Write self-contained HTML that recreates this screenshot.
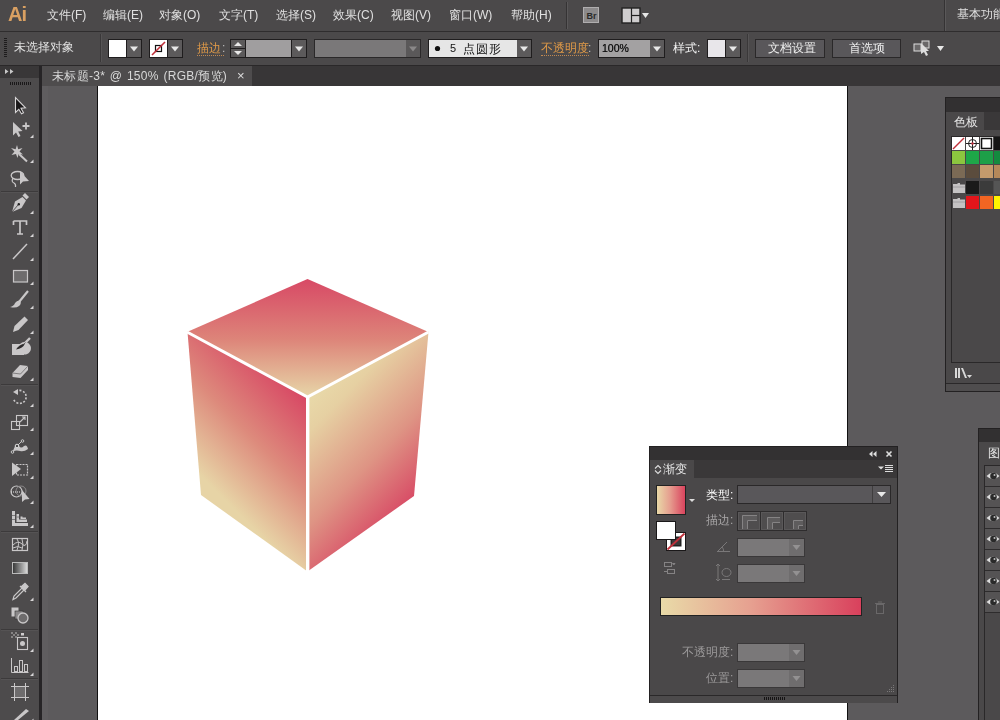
<!DOCTYPE html>
<html><head><meta charset="utf-8">
<style>
*{margin:0;padding:0;box-sizing:border-box}
html,body{width:1000px;height:720px;overflow:hidden;background:#5c5a5c;font-family:"Liberation Sans",sans-serif;font-size:12px;color:#e0e0e0}
.a{position:absolute}
.t{position:absolute;white-space:nowrap;line-height:1;will-change:transform}
</style></head><body>
<div class="a" style="left:0px;top:0px;width:1000px;height:31px;background:#4b494a;"></div><div class="a" style="left:0px;top:31px;width:1000px;height:1px;background:#2f2d2e;"></div><div class="t" style="left:8px;top:4px;font-size:20px;font-weight:bold;color:#d9a062;letter-spacing:-1px">Ai</div><div class="t" style="left:47px;top:9px;">文件(F)</div><div class="t" style="left:103px;top:9px;">编辑(E)</div><div class="t" style="left:159px;top:9px;">对象(O)</div><div class="t" style="left:219px;top:9px;">文字(T)</div><div class="t" style="left:276px;top:9px;">选择(S)</div><div class="t" style="left:333px;top:9px;">效果(C)</div><div class="t" style="left:391px;top:9px;">视图(V)</div><div class="t" style="left:449px;top:9px;">窗口(W)</div><div class="t" style="left:511px;top:9px;">帮助(H)</div><div class="a" style="left:566px;top:2px;width:1px;height:27px;background:#353334;"></div><div class="a" style="left:567px;top:2px;width:1px;height:27px;background:#5a5859;"></div><svg class="a" style="left:580px;top:5px" width="75" height="22" viewBox="0 0 75 22"><rect x="3.5" y="2.5" width="15" height="15" fill="#8c8a8b" stroke="#b0aeaf"/><text x="6.5" y="14" font-family="Liberation Sans" font-size="9" font-weight="bold" fill="#2a2a2a">Br</text><rect x="42" y="3" width="18" height="15" fill="#cfcdce" stroke="#222" stroke-width="1.4"/><line x1="51.5" y1="3" x2="51.5" y2="18" stroke="#222" stroke-width="1.2"/><line x1="51.5" y1="10.5" x2="60" y2="10.5" stroke="#222" stroke-width="1.2"/><path d="M62 8 L69 8 L65.5 13 Z" fill="#e6e6e6"/></svg><div class="a" style="left:944px;top:0px;width:1px;height:31px;background:#353334;"></div><div class="a" style="left:945px;top:0px;width:1px;height:31px;background:#5a5859;"></div><div class="t" style="left:957px;top:8px;">基本功能</div><div class="a" style="left:0px;top:32px;width:1000px;height:33px;background:#4b494a;"></div><div class="a" style="left:0px;top:65px;width:1000px;height:1px;background:#2a2829;"></div><svg class="a" style="left:4px;top:38px" width="4" height="20"><g fill="#1e1c1d"><rect x="0" y="0" width="3" height="1"/><rect x="0" y="2" width="3" height="1"/><rect x="0" y="4" width="3" height="1"/><rect x="0" y="6" width="3" height="1"/><rect x="0" y="8" width="3" height="1"/><rect x="0" y="10" width="3" height="1"/><rect x="0" y="12" width="3" height="1"/><rect x="0" y="14" width="3" height="1"/><rect x="0" y="16" width="3" height="1"/><rect x="0" y="18" width="3" height="1"/></g></svg><div class="t" style="left:14px;top:41px;">未选择对象</div><div class="a" style="left:100px;top:34px;width:1px;height:28px;background:#3a3839;"></div><div class="a" style="left:101px;top:34px;width:1px;height:28px;background:#565455;"></div><div class="a" style="left:108px;top:39px;width:34px;height:19px;background:#1f1d1e;"></div><div class="a" style="left:109px;top:40px;width:17px;height:17px;background:#ffffff;"></div><div class="a" style="left:127px;top:40px;width:14px;height:17px;background:#5c5a5b;"></div><svg class="a" style="left:127px;top:40px" width="14" height="17"><path d="M3.0 6.5 L11.0 6.5 L7.0 11.5 Z" fill="#e8e8e8"/></svg><div class="a" style="left:149px;top:39px;width:34px;height:19px;background:#1f1d1e;"></div><div class="a" style="left:150px;top:40px;width:17px;height:17px;background:#ffffff;"></div><svg class="a" style="left:150px;top:40px" width="17" height="17"><rect x="5.5" y="5.5" width="6" height="6" fill="none" stroke="#111" stroke-width="1.2"/><line x1="2" y1="15" x2="15" y2="2" stroke="#c0303a" stroke-width="1.6"/></svg><div class="a" style="left:168px;top:40px;width:14px;height:17px;background:#5c5a5b;"></div><svg class="a" style="left:168px;top:40px" width="14" height="17"><path d="M3.0 6.5 L11.0 6.5 L7.0 11.5 Z" fill="#e8e8e8"/></svg><div class="t" style="left:197px;top:42px;color:#e09a48">描边</div><div class="a" style="left:197px;top:55px;width:27px;height:0;border-top:1px dotted #c08850"></div><div class="t" style="left:222px;top:42px;color:#bbb">:</div><div class="a" style="left:230px;top:39px;width:77px;height:19px;background:#1f1d1e;"></div><div class="a" style="left:231px;top:40px;width:14px;height:8px;background:#5c5a5b;"></div><div class="a" style="left:231px;top:49px;width:14px;height:8px;background:#5c5a5b;"></div><svg class="a" style="left:231px;top:40px" width="14" height="17"><path d="M3 6 L11 6 L7 2 Z M3 11 L11 11 L7 15 Z" fill="#e8e8e8"/></svg><div class="a" style="left:246px;top:40px;width:45px;height:17px;background:#a09e9f;"></div><div class="a" style="left:292px;top:40px;width:14px;height:17px;background:#5c5a5b;"></div><svg class="a" style="left:292px;top:40px" width="14" height="17"><path d="M3.0 6.5 L11.0 6.5 L7.0 11.5 Z" fill="#e8e8e8"/></svg><div class="a" style="left:314px;top:39px;width:107px;height:19px;background:#2a2829;"></div><div class="a" style="left:315px;top:40px;width:91px;height:17px;background:#7a7879;"></div><div class="a" style="left:406px;top:40px;width:14px;height:17px;background:#5a5859;"></div><svg class="a" style="left:406px;top:40px" width="14" height="17"><path d="M3.0 6.5 L11.0 6.5 L7.0 11.5 Z" fill="#8a8889"/></svg><div class="a" style="left:428px;top:39px;width:104px;height:19px;background:#1f1d1e;"></div><div class="a" style="left:429px;top:40px;width:88px;height:17px;background:#e6e6e6;"></div><svg class="a" style="left:429px;top:40px" width="88" height="17"><circle cx="8.5" cy="8.5" r="2.6" fill="#111"/></svg><div class="t" style="left:450px;top:43px;color:#111;font-size:11px">5</div><div class="t" style="left:463px;top:43px;color:#111;letter-spacing:0.8px">点圆形</div><div class="a" style="left:517px;top:40px;width:14px;height:17px;background:#5c5a5b;"></div><svg class="a" style="left:517px;top:40px" width="14" height="17"><path d="M3.0 6.5 L11.0 6.5 L7.0 11.5 Z" fill="#e8e8e8"/></svg><div class="t" style="left:541px;top:42px;color:#e09a48">不透明度</div><div class="a" style="left:541px;top:55px;width:48px;height:0;border-top:1px dotted #c08850"></div><div class="t" style="left:588px;top:42px;color:#bbb">:</div><div class="a" style="left:598px;top:39px;width:67px;height:19px;background:#1f1d1e;"></div><div class="a" style="left:599px;top:40px;width:51px;height:17px;background:#a3a1a2;"></div><div class="t" style="left:602px;top:43px;color:#000;font-size:10.5px;-webkit-text-stroke:0.2px #000">100%</div><div class="a" style="left:650px;top:40px;width:14px;height:17px;background:#5c5a5b;"></div><svg class="a" style="left:650px;top:40px" width="14" height="17"><path d="M3.0 6.5 L11.0 6.5 L7.0 11.5 Z" fill="#e8e8e8"/></svg><div class="t" style="left:673px;top:42px;color:#f2f2f2">样式:</div><div class="a" style="left:707px;top:39px;width:34px;height:19px;background:#1f1d1e;"></div><div class="a" style="left:708px;top:40px;width:17px;height:17px;background:#e8e6ea;"></div><div class="a" style="left:726px;top:40px;width:14px;height:17px;background:#5c5a5b;"></div><svg class="a" style="left:726px;top:40px" width="14" height="17"><path d="M3.0 6.5 L11.0 6.5 L7.0 11.5 Z" fill="#e8e8e8"/></svg><div class="a" style="left:747px;top:34px;width:1px;height:28px;background:#3a3839;"></div><div class="a" style="left:748px;top:34px;width:1px;height:28px;background:#565455;"></div><div class="a" style="left:755px;top:39px;width:70px;height:19px;background:#2a2829;"></div><div class="a" style="left:756px;top:40px;width:68px;height:17px;background:#59575a;"></div><div class="t" style="left:768px;top:42px;color:#eee">文档设置</div><div class="a" style="left:832px;top:39px;width:69px;height:19px;background:#2a2829;"></div><div class="a" style="left:833px;top:40px;width:67px;height:17px;background:#59575a;"></div><div class="t" style="left:849px;top:42px;color:#eee">首选项</div><svg class="a" style="left:910px;top:38px" width="40" height="20"><rect x="4" y="6" width="7" height="7" fill="#6a6869" stroke="#ddd"/><rect x="12" y="3" width="7" height="7" fill="#6a6869" stroke="#ddd"/><path d="M11 5 L19 13 L16 13 L18 17 L16 18 L14 14 L11 16 Z" fill="#ddd"/><path d="M27 8 L34 8 L30.5 13 Z" fill="#e8e8e8"/></svg><div class="a" style="left:0px;top:66px;width:1000px;height:20px;background:#383637;"></div><div class="a" style="left:41px;top:66px;width:211px;height:20px;background:#4e4c4d;"></div><div class="t" style="left:52px;top:70px;color:#d8d8d8;letter-spacing:0.3px;word-spacing:1px">未标题-3* @ 150% (RGB/预览)</div><div class="t" style="left:237px;top:69px;color:#ddd;font-size:13px">×</div><div class="a" style="left:41px;top:86px;width:959px;height:634px;background:#5c5a5c;"></div><div class="a" style="left:97px;top:86px;width:751px;height:634px;background:#111;"></div><div class="a" style="left:98px;top:86px;width:749px;height:634px;background:#ffffff;"></div><div class="a" style="left:0px;top:66px;width:39px;height:654px;background:#4d4b4c;"></div><div class="a" style="left:0px;top:66px;width:39px;height:12px;background:#393738;"></div><svg class="a" style="left:4px;top:67px" width="20" height="9"><path d="M1 2 L4.5 4.5 L1 7 Z M6 2 L9.5 4.5 L6 7 Z" fill="#c8c8c8"/></svg><div class="a" style="left:39px;top:66px;width:3px;height:654px;background:#262426;"></div><div class="a" style="left:42px;top:86px;width:6px;height:634px;background:#5f5d5f;"></div><svg class="a" style="left:10px;top:82px" width="22" height="4"><g fill="#1a1819"><rect x="0" y="0" width="1" height="3"/><rect x="2" y="0" width="1" height="3"/><rect x="4" y="0" width="1" height="3"/><rect x="6" y="0" width="1" height="3"/><rect x="8" y="0" width="1" height="3"/><rect x="10" y="0" width="1" height="3"/><rect x="12" y="0" width="1" height="3"/><rect x="14" y="0" width="1" height="3"/><rect x="16" y="0" width="1" height="3"/><rect x="18" y="0" width="1" height="3"/><rect x="20" y="0" width="1" height="3"/></g></svg><svg class="a" style="left:0;top:0" width="1000" height="720" viewBox="0 0 1000 720"><defs><linearGradient id="gt" gradientUnits="userSpaceOnUse" x1="307" y1="281" x2="307" y2="397"><stop offset="0" stop-color="#d84b66"/><stop offset="0.5" stop-color="#dd8479"/><stop offset="1" stop-color="#e7d6a8"/></linearGradient><linearGradient id="gl" gradientUnits="userSpaceOnUse" x1="300" y1="395" x2="210" y2="485"><stop offset="0" stop-color="#d84a65"/><stop offset="0.5" stop-color="#dd8a7c"/><stop offset="1" stop-color="#e7d4a6"/></linearGradient><linearGradient id="gr" gradientUnits="userSpaceOnUse" x1="310" y1="400" x2="414" y2="500"><stop offset="0" stop-color="#e8d8a8"/><stop offset="0.15" stop-color="#e6d0a2"/><stop offset="0.6" stop-color="#de9484"/><stop offset="1" stop-color="#d84a65"/></linearGradient></defs><path d="M307.5 279 L428.5 332 L307.5 397 L187 332 Z" fill="url(#gt)"/><path d="M187.5 332 L307.5 397 L307.5 571.5 L201 495 Z" fill="url(#gl)"/><path d="M307.5 397 L428.5 332 L414 496 L307.5 571.5 Z" fill="url(#gr)"/><path d="M187 332 L307.5 397 L428.5 332" fill="none" stroke="#fff" stroke-width="3" stroke-linejoin="miter"/><path d="M307.7 397 L307.7 572" fill="none" stroke="#fff" stroke-width="3.4"/></svg><div class="a" style="left:945px;top:97px;width:55px;height:295px;background:#232122;"></div><div class="a" style="left:946px;top:98px;width:54px;height:14px;background:#323031;"></div><div class="a" style="left:946px;top:112px;width:54px;height:18px;background:#3a3839;"></div><div class="a" style="left:946px;top:112px;width:38px;height:19px;background:#4a4849;"></div><div class="t" style="left:954px;top:116px;color:#e6e6e6;font-size:12px">色板</div><div class="a" style="left:946px;top:130px;width:54px;height:254px;background:#4a4849;"></div><div class="a" style="left:951px;top:136px;width:49px;height:227px;background:#2a2829;"></div><div class="a" style="left:952px;top:137px;width:48px;height:225px;background:#4a4849;"></div><div class="a" style="left:952px;top:137px;width:13px;height:13px;background:#fff;"></div><svg class="a" style="left:952px;top:137px" width="13" height="13"><line x1="1" y1="12" x2="12" y2="1" stroke="#c0303a" stroke-width="1.5"/></svg><div class="a" style="left:966px;top:137px;width:13px;height:13px;background:#fff;"></div><svg class="a" style="left:966px;top:137px" width="13" height="13"><circle cx="6.5" cy="6.5" r="4" fill="none" stroke="#222" stroke-width="1"/><line x1="6.5" y1="0" x2="6.5" y2="13" stroke="#222"/><line x1="0" y1="6.5" x2="13" y2="6.5" stroke="#222"/><circle cx="6.5" cy="6.5" r="1.3" fill="#c03040"/></svg><div class="a" style="left:980px;top:137px;width:13px;height:13px;background:#fff;"></div><svg class="a" style="left:980px;top:137px" width="13" height="13"><rect x="1.5" y="1.5" width="10" height="10" fill="#fff" stroke="#111" stroke-width="1.6"/></svg><div class="a" style="left:994px;top:137px;width:13px;height:13px;background:#151515;"></div><div class="a" style="left:952px;top:151px;width:13px;height:13px;background:#8cc63f;"></div><div class="a" style="left:966px;top:151px;width:13px;height:13px;background:#1ea748;"></div><div class="a" style="left:980px;top:151px;width:13px;height:13px;background:#1d9f48;"></div><div class="a" style="left:994px;top:151px;width:13px;height:13px;background:#138a3f;"></div><div class="a" style="left:952px;top:165px;width:13px;height:13px;background:#7b6a55;"></div><div class="a" style="left:966px;top:165px;width:13px;height:13px;background:#5b4c3d;"></div><div class="a" style="left:980px;top:165px;width:13px;height:13px;background:#c49a6c;"></div><div class="a" style="left:994px;top:165px;width:13px;height:13px;background:#b5885a;"></div><div class="a" style="left:952px;top:181px;width:13px;height:13px;background:#4a4849;"></div><svg class="a" style="left:952px;top:181px" width="13" height="13"><path d="M1 3 L5 3 L6 2 L8 2 L8 3.5 L13 3.5 L13 12 L1 12 Z" fill="#c4c2c3"/><path d="M1 6 H13" stroke="#9a9899" stroke-width="0.8"/></svg><div class="a" style="left:966px;top:181px;width:13px;height:13px;background:#1a1a1a;"></div><div class="a" style="left:980px;top:181px;width:13px;height:13px;background:#3b3b3b;"></div><div class="a" style="left:994px;top:181px;width:13px;height:13px;background:#555;"></div><div class="a" style="left:952px;top:196px;width:13px;height:13px;background:#4a4849;"></div><svg class="a" style="left:952px;top:196px" width="13" height="13"><path d="M1 3 L5 3 L6 2 L8 2 L8 3.5 L13 3.5 L13 12 L1 12 Z" fill="#c4c2c3"/><path d="M1 6 H13" stroke="#9a9899" stroke-width="0.8"/></svg><div class="a" style="left:966px;top:196px;width:13px;height:13px;background:#e3151b;"></div><div class="a" style="left:980px;top:196px;width:13px;height:13px;background:#f26522;"></div><div class="a" style="left:994px;top:196px;width:13px;height:13px;background:#fff200;"></div><svg class="a" style="left:954px;top:366px" width="22" height="14"><g fill="#d8d8d8"><rect x="1" y="2" width="2" height="10"/><rect x="4" y="2" width="2" height="10"/><path d="M7 2 L9 2 L13 12 L11 12 Z"/></g><path d="M13 9 L18 9 L15.5 12 Z" fill="#d8d8d8"/></svg><div class="a" style="left:946px;top:383px;width:54px;height:1px;background:#2a2829;"></div><div class="a" style="left:946px;top:384px;width:54px;height:7px;background:#4f4d4e;"></div><div class="a" style="left:978px;top:428px;width:22px;height:292px;background:#232122;"></div><div class="a" style="left:979px;top:429px;width:21px;height:13px;background:#323031;"></div><div class="a" style="left:979px;top:442px;width:21px;height:24px;background:#4a4849;"></div><div class="t" style="left:988px;top:447px;color:#e6e6e6;font-size:12px">图层</div><div class="a" style="left:979px;top:466px;width:21px;height:254px;background:#4a4849;"></div><div class="a" style="left:984px;top:465px;width:1px;height:255px;background:#2a2829;"></div><div class="a" style="left:985px;top:465px;width:15px;height:1px;background:#2a2829;"></div><div class="a" style="left:985px;top:466px;width:15px;height:20px;background:#555354;"></div><div class="a" style="left:985px;top:486px;width:15px;height:1px;background:#2e2c2d;"></div><svg class="a" style="left:986px;top:470px" width="14" height="12"><path d="M0.5 6 Q7 -0.5 13.5 6 Q7 12.5 0.5 6 Z" fill="#dcdcdc"/><circle cx="7.5" cy="6" r="3.3" fill="#2a2a2a"/><circle cx="8.5" cy="5" r="1" fill="#bbb"/></svg><div class="a" style="left:985px;top:487px;width:15px;height:20px;background:#555354;"></div><div class="a" style="left:985px;top:507px;width:15px;height:1px;background:#2e2c2d;"></div><svg class="a" style="left:986px;top:491px" width="14" height="12"><path d="M0.5 6 Q7 -0.5 13.5 6 Q7 12.5 0.5 6 Z" fill="#dcdcdc"/><circle cx="7.5" cy="6" r="3.3" fill="#2a2a2a"/><circle cx="8.5" cy="5" r="1" fill="#bbb"/></svg><div class="a" style="left:985px;top:508px;width:15px;height:20px;background:#555354;"></div><div class="a" style="left:985px;top:528px;width:15px;height:1px;background:#2e2c2d;"></div><svg class="a" style="left:986px;top:512px" width="14" height="12"><path d="M0.5 6 Q7 -0.5 13.5 6 Q7 12.5 0.5 6 Z" fill="#dcdcdc"/><circle cx="7.5" cy="6" r="3.3" fill="#2a2a2a"/><circle cx="8.5" cy="5" r="1" fill="#bbb"/></svg><div class="a" style="left:985px;top:529px;width:15px;height:20px;background:#555354;"></div><div class="a" style="left:985px;top:549px;width:15px;height:1px;background:#2e2c2d;"></div><svg class="a" style="left:986px;top:533px" width="14" height="12"><path d="M0.5 6 Q7 -0.5 13.5 6 Q7 12.5 0.5 6 Z" fill="#dcdcdc"/><circle cx="7.5" cy="6" r="3.3" fill="#2a2a2a"/><circle cx="8.5" cy="5" r="1" fill="#bbb"/></svg><div class="a" style="left:985px;top:550px;width:15px;height:20px;background:#555354;"></div><div class="a" style="left:985px;top:570px;width:15px;height:1px;background:#2e2c2d;"></div><svg class="a" style="left:986px;top:554px" width="14" height="12"><path d="M0.5 6 Q7 -0.5 13.5 6 Q7 12.5 0.5 6 Z" fill="#dcdcdc"/><circle cx="7.5" cy="6" r="3.3" fill="#2a2a2a"/><circle cx="8.5" cy="5" r="1" fill="#bbb"/></svg><div class="a" style="left:985px;top:571px;width:15px;height:20px;background:#555354;"></div><div class="a" style="left:985px;top:591px;width:15px;height:1px;background:#2e2c2d;"></div><svg class="a" style="left:986px;top:575px" width="14" height="12"><path d="M0.5 6 Q7 -0.5 13.5 6 Q7 12.5 0.5 6 Z" fill="#dcdcdc"/><circle cx="7.5" cy="6" r="3.3" fill="#2a2a2a"/><circle cx="8.5" cy="5" r="1" fill="#bbb"/></svg><div class="a" style="left:985px;top:592px;width:15px;height:20px;background:#555354;"></div><div class="a" style="left:985px;top:612px;width:15px;height:1px;background:#2e2c2d;"></div><svg class="a" style="left:986px;top:596px" width="14" height="12"><path d="M0.5 6 Q7 -0.5 13.5 6 Q7 12.5 0.5 6 Z" fill="#dcdcdc"/><circle cx="7.5" cy="6" r="3.3" fill="#2a2a2a"/><circle cx="8.5" cy="5" r="1" fill="#bbb"/></svg><div class="a" style="left:649px;top:446px;width:249px;height:257px;background:#232122;"></div><div class="a" style="left:650px;top:447px;width:247px;height:13px;background:#333132;"></div><svg class="a" style="left:866px;top:449px" width="30" height="10"><path d="M3 5 L6.5 2 L6.5 8 Z M7 5 L10.5 2 L10.5 8 Z" fill="#ddd"/><path d="M20.5 2.5 L25.5 7.5 M25.5 2.5 L20.5 7.5" stroke="#ddd" stroke-width="1.6"/></svg><div class="a" style="left:650px;top:460px;width:247px;height:18px;background:#3a3839;"></div><div class="a" style="left:650px;top:460px;width:44px;height:19px;background:#4a4849;"></div><svg class="a" style="left:654px;top:464px" width="8" height="11"><path d="M1 4.5 L4 1.5 L7 4.5 M1 6.5 L4 9.5 L7 6.5" stroke="#ddd" stroke-width="1.1" fill="none"/></svg><div class="t" style="left:663px;top:463px;color:#e6e6e6;font-size:12px">渐变</div><svg class="a" style="left:877px;top:463px" width="17" height="11"><path d="M1 3.5 L7 3.5 L4 6.5 Z" fill="#ddd"/><path d="M8 2.5 H16 M8 4.5 H16 M8 6.5 H16 M8 8.5 H16" stroke="#ddd" stroke-width="1"/></svg><div class="a" style="left:650px;top:478px;width:247px;height:217px;background:#4a4849;"></div><svg class="a" style="left:650px;top:478px" width="246" height="217"><defs><linearGradient id="gb" x1="0" x2="1" y1="0" y2="0"><stop offset="0" stop-color="#e9dba8"/><stop offset="0.45" stop-color="#e6a090"/><stop offset="1" stop-color="#d9405c"/></linearGradient></defs><rect x="6.5" y="7.5" width="29" height="29" fill="url(#gb)" stroke="#222"/><path d="M39 21 L45 21 L42 24 Z" fill="#ddd"/><rect x="16.5" y="54.5" width="19" height="18" fill="#fff" stroke="#1a1819"/><rect x="20.5" y="58.5" width="11" height="10" fill="#222" stroke="#fff" stroke-width="0"/><rect x="22" y="60" width="8" height="7" fill="#3a3839"/><line x1="17.5" y1="71.5" x2="34.5" y2="55.5" stroke="#c0303a" stroke-width="1.8"/><rect x="6.5" y="43.5" width="19" height="18" fill="#fff" stroke="#1a1819"/><g fill="none" stroke="#858384"><rect x="14.5" y="84.5" width="7" height="4"/><rect x="17.5" y="91.5" width="7" height="4"/><path d="M22.5 85.5 L25 85.5 L23.75 87 Z M14 93.5 H17"/></g><rect x="10.5" y="119.5" width="201" height="18" fill="url(#gb)" stroke="#222"/><g fill="none" stroke="#6a6869"><rect x="226.5" y="126.5" width="7" height="9"/><path d="M225 125.5 H235 M228 124 H232"/></g><g fill="none" stroke="#7a7879" stroke-width="1"><path d="M67.5 73.5 L77 64 M67 73.5 H80 M72 69 Q74 71 73.5 73.5"/><ellipse cx="76.5" cy="94.5" rx="4.5" ry="4"/><path d="M68 86 V103 M66 88 L68 86 L70 88 M66 101 L68 103 L70 101 M72 101.5 H80"/></g></svg><div class="t" style="left:706px;top:489px;color:#ffffff">类型:</div><div class="a" style="left:737px;top:485px;width:154px;height:19px;background:#2a2829;"></div><div class="a" style="left:738px;top:486px;width:152px;height:17px;background:#59575a;"></div><div class="a" style="left:872px;top:486px;width:1px;height:17px;background:#3f3d3e;"></div><svg class="a" style="left:873px;top:486px" width="17" height="17"><path d="M4 6 L13 6 L8.5 11 Z" fill="#e8e8e8"/></svg><div class="t" style="left:706px;top:514px;color:#a8a6a7">描边:</div><div class="a" style="left:737px;top:511px;width:70px;height:20px;background:#2e2c2d;"></div><div class="a" style="left:738px;top:512px;width:22px;height:18px;background:#5a5859;"></div><div class="a" style="left:739px;top:513px;width:20px;height:16px;background:#4f4d4e;"></div><svg class="a" style="left:738px;top:512px" width="22" height="18"><path d="M4 17 V3 H19 V8 H9 V17 Z" fill="#5e5c5d"/><path d="M4.5 17 V3.5 H19 M9.5 17 V8.5 H19" fill="none" stroke="#858384" stroke-width="1"/></svg><div class="a" style="left:761px;top:512px;width:22px;height:18px;background:#5a5859;"></div><div class="a" style="left:762px;top:513px;width:20px;height:16px;background:#4f4d4e;"></div><svg class="a" style="left:761px;top:512px" width="22" height="18"><path d="M6 17 V5 H19 V10 H11 V17 Z" fill="#5e5c5d"/><path d="M6.5 17 V5.5 H19 M11.5 17 V10.5 H19" fill="none" stroke="#858384" stroke-width="1"/></svg><div class="a" style="left:784px;top:512px;width:22px;height:18px;background:#5a5859;"></div><div class="a" style="left:785px;top:513px;width:20px;height:16px;background:#4f4d4e;"></div><svg class="a" style="left:784px;top:512px" width="22" height="18"><path d="M9 17 V8 H19 V13 H14 V17 Z" fill="#5e5c5d"/><path d="M9.5 17 V8.5 H19 M14.5 17 V13.5 H19" fill="none" stroke="#858384" stroke-width="1"/></svg><div class="a" style="left:737px;top:538px;width:68px;height:19px;background:#3a3839;"></div><div class="a" style="left:738px;top:539px;width:51px;height:17px;background:#7a7879;"></div><div class="a" style="left:789px;top:539px;width:15px;height:17px;background:#6f6d6e;"></div><svg class="a" style="left:789px;top:539px" width="15" height="17"><path d="M3.5 6 L11.5 6 L7.5 11 Z" fill="#939192"/></svg><div class="a" style="left:737px;top:564px;width:68px;height:19px;background:#3a3839;"></div><div class="a" style="left:738px;top:565px;width:51px;height:17px;background:#7a7879;"></div><div class="a" style="left:789px;top:565px;width:15px;height:17px;background:#6f6d6e;"></div><svg class="a" style="left:789px;top:565px" width="15" height="17"><path d="M3.5 6 L11.5 6 L7.5 11 Z" fill="#939192"/></svg><div class="a" style="left:737px;top:643px;width:68px;height:19px;background:#3a3839;"></div><div class="a" style="left:738px;top:644px;width:51px;height:17px;background:#7a7879;"></div><div class="a" style="left:789px;top:644px;width:15px;height:17px;background:#6f6d6e;"></div><svg class="a" style="left:789px;top:644px" width="15" height="17"><path d="M3.5 6 L11.5 6 L7.5 11 Z" fill="#939192"/></svg><div class="a" style="left:737px;top:669px;width:68px;height:19px;background:#3a3839;"></div><div class="a" style="left:738px;top:670px;width:51px;height:17px;background:#7a7879;"></div><div class="a" style="left:789px;top:670px;width:15px;height:17px;background:#6f6d6e;"></div><svg class="a" style="left:789px;top:670px" width="15" height="17"><path d="M3.5 6 L11.5 6 L7.5 11 Z" fill="#939192"/></svg><div class="t" style="left:682px;top:646px;color:#9c9a9b">不透明度:</div><div class="t" style="left:706px;top:672px;color:#9c9a9b">位置:</div><div class="a" style="left:650px;top:695px;width:247px;height:1px;background:#2a2829;"></div><div class="a" style="left:650px;top:696px;width:247px;height:7px;background:#4c4a4b;"></div><svg class="a" style="left:764px;top:696px" width="22" height="5"><g fill="#151314"><rect x="0" y="1" width="1" height="3"/><rect x="2" y="1" width="1" height="3"/><rect x="4" y="1" width="1" height="3"/><rect x="6" y="1" width="1" height="3"/><rect x="8" y="1" width="1" height="3"/><rect x="10" y="1" width="1" height="3"/><rect x="12" y="1" width="1" height="3"/><rect x="14" y="1" width="1" height="3"/><rect x="16" y="1" width="1" height="3"/><rect x="18" y="1" width="1" height="3"/><rect x="20" y="1" width="1" height="3"/></g></svg><div class="a" style="left:847px;top:703px;width:1px;height:17px;background:#111;"></div><svg class="a" style="left:887px;top:684px" width="9" height="10"><g fill="#7a7879"><rect x="6" y="1" width="1" height="1"/><rect x="4" y="3" width="1" height="1"/><rect x="6" y="3" width="1" height="1"/><rect x="2" y="5" width="1" height="1"/><rect x="4" y="5" width="1" height="1"/><rect x="6" y="5" width="1" height="1"/><rect x="0" y="7" width="1" height="1"/><rect x="2" y="7" width="1" height="1"/><rect x="4" y="7" width="1" height="1"/><rect x="6" y="7" width="1" height="1"/></g></svg><svg class="a" style="left:0;top:0" width="40" height="720" viewBox="0 0 40 720"><path d="M15.5 97.5 L15.5 112.5 L18.8 109.3 L21.5 113.8 L23.5 112.8 L21 108.3 L25.5 107.8 Z" fill="#1a1819" stroke="#d8d6d7" stroke-width="1.1" stroke-linejoin="miter"/><path d="M13 122 L13 135.5 L16 132.5 L18.5 137 L20.5 136 L18.2 131.5 L22.5 131 Z" fill="#c9c7c8"/><path d="M22.5 126 H29.5 M26 122.5 V129.5" stroke="#c9c7c8" stroke-width="1.8"/><path d="M17 145 L18.2 149.3 L22.5 148 L19.5 151.5 L23 154.5 L18.6 154 L17.5 158 L16 154 L11.5 155 L14.5 151.5 L11 148 L15.6 149.2 Z" fill="#c9c7c8"/><path d="M19 154 L27 161.5" stroke="#c9c7c8" stroke-width="2"/><ellipse cx="17.5" cy="175.5" rx="6.3" ry="4" fill="none" stroke="#c9c7c8" stroke-width="1.3"/><path d="M13 178 Q11 182 14 183 Q16 184 15.5 187" fill="none" stroke="#c9c7c8" stroke-width="1.2"/><path d="M20 171 L20 184.5 L23 181.5 L29 181 Z" fill="#c9c7c8"/><path d="M12 212 L15 201.5 L22.5 197 L26 200.5 L21.5 208 Z" fill="#c9c7c8"/><path d="M12 212 L18 205" stroke="#4d4b4c" stroke-width="0.9"/><circle cx="18.8" cy="204.2" r="1.2" fill="#222"/><path d="M22.5 195.5 L25 193 L29 197 L26.5 199.5 Z" fill="#c9c7c8"/><path d="M13.5 221 H26.5 V225 M13.5 221 V225 M20 221 V234 M17 234 H23" fill="none" stroke="#c9c7c8" stroke-width="1.7"/><path d="M13 259 L27 244" stroke="#c9c7c8" stroke-width="1.5"/><rect x="13.5" y="270.5" width="14" height="11.5" fill="#6e6c6d" stroke="#c9c7c8" stroke-width="1.2"/><path d="M28 291 L19 302" stroke="#c9c7c8" stroke-width="2.2"/><path d="M20 300.5 Q17 300 15 303 Q14 306 10 307 Q16 308.5 19 306 Q21.5 304 20.5 301 Z" fill="#c9c7c8"/><path d="M13 332 L14.5 326 L24.5 316.5 L28 320 L18.5 330 Z" fill="#c9c7c8"/><path d="M12 344 H20 A6.3 6.3 0 1 1 24 354.5 V355 H12 Z" fill="#c9c7c8"/><path d="M16 349.5 Q19 344.5 25 343.5 Q23 348.5 16 349.5 Z" fill="#2e2c2d"/><path d="M24.5 343.5 L30 338" stroke="#c9c7c8" stroke-width="2.4"/><path d="M23.5 344.5 L25.5 342.5" stroke="#4d4b4c" stroke-width="0.8"/><path d="M12.5 373 L20 365 L28 366 L28 370 L20.5 378 L12.5 377 Z" fill="#c9c7c8"/><path d="M12.5 373 L20.5 374 L28 366" fill="none" stroke="#6e6c6d" stroke-width="0.8"/><path d="M16 391.5 A6.5 6.5 0 1 1 13.5 399" fill="none" stroke="#c9c7c8" stroke-width="1.6" stroke-dasharray="2 1.6"/><path d="M13 392 L18 389 L18 395 Z" fill="#c9c7c8"/><rect x="11.5" y="421.5" width="8" height="8" fill="none" stroke="#c9c7c8" stroke-width="1.1"/><rect x="16.5" y="415.5" width="11" height="10" fill="none" stroke="#c9c7c8" stroke-width="1.1"/><path d="M20 422 L25 417 M22 417 H25 V420" fill="none" stroke="#c9c7c8" stroke-width="1.1"/><path d="M13 451 Q16 442 19 446 Q21 449 24 446 Q27 444 28 449 Q24 452 20 451 Q17 450 13 451 Z" fill="#c9c7c8"/><path d="M13 452 L17 446 L22 441" fill="none" stroke="#c9c7c8" stroke-width="1"/><circle cx="17" cy="446" r="1.8" fill="#4d4b4c" stroke="#ddd"/><circle cx="22.5" cy="441" r="1.3" fill="#4d4b4c" stroke="#ddd" stroke-width="0.8"/><circle cx="12.5" cy="452" r="1.3" fill="#4d4b4c" stroke="#ddd" stroke-width="0.8"/><rect x="16.5" y="464.5" width="11" height="10.5" fill="none" stroke="#c9c7c8" stroke-width="1.2" stroke-dasharray="2 1"/><path d="M12 462.5 L12 476 L21 469 Z" fill="#c9c7c8"/><circle cx="16.5" cy="491.5" r="5.5" fill="none" stroke="#c9c7c8" stroke-width="1.2"/><circle cx="21" cy="491" r="5" fill="none" stroke="#8a8889" stroke-width="1"/><path d="M11 492 H21" stroke="#eee" stroke-width="1.2" stroke-dasharray="1 1"/><path d="M22 490 L22 502 L25 499.5 L29.5 499 Z" fill="#c9c7c8"/><g fill="#c9c7c8"><path d="M12 511 H15 V523 H28 V526 H12 Z"/><path d="M16.5 514 H19 V519.5 H27 V522 H16.5 Z"/><path d="M20.5 516.5 H22.5 V517.5 H26 V519 H20.5 Z"/></g><path d="M12 515.5 H15 M12 519.5 H15 M16.5 517 H19" stroke="#6a6869" stroke-width="0.8"/><rect x="12.5" y="538.5" width="15" height="12" fill="none" stroke="#c9c7c8" stroke-width="1.2"/><path d="M13 545 Q18 540 22 544 T27 541 M13 548 Q18 545 22 548 M17 539 Q20 543 17 550 M22 539 Q24 545 22 550" fill="none" stroke="#c9c7c8" stroke-width="1"/><defs><linearGradient id="tg" x1="0" x2="1"><stop offset="0" stop-color="#333"/><stop offset="1" stop-color="#ddd"/></linearGradient></defs><rect x="12.5" y="562.5" width="15" height="11" fill="url(#tg)" stroke="#bbb" stroke-width="1"/><path d="M13 599.5 L14 596 L22 588 L24 590 L16 598 Z" fill="none" stroke="#c9c7c8" stroke-width="1.2"/><path d="M21 587 L25 583.5 L28 586.5 L24.5 590.5 Z M20 586 L26 592" fill="#c9c7c8" stroke="#c9c7c8" stroke-width="1.3"/><rect x="11.5" y="607.5" width="7" height="9" fill="#c9c7c8"/><rect x="15" y="611" width="8" height="8" fill="#8a8889" stroke="#333" stroke-width="0.6"/><circle cx="23" cy="618" r="5" fill="#6e6c6d" stroke="#c9c7c8" stroke-width="1.3"/><g fill="#cfcdce"><circle cx="12" cy="633" r="0.8"/><circle cx="14" cy="635" r="0.8"/><circle cx="16" cy="633" r="0.8"/><circle cx="12" cy="637" r="0.8"/><circle cx="16" cy="637" r="0.8"/><circle cx="18" cy="635" r="0.8"/><rect x="21" y="633" width="3" height="2.5"/></g><rect x="17.5" y="637.5" width="10" height="12" fill="none" stroke="#c9c7c8" stroke-width="1.1"/><circle cx="22.5" cy="643.5" r="2.5" fill="#c9c7c8"/><g fill="none" stroke="#c9c7c8" stroke-width="1"><path d="M11.5 658 V672.5 H28.5"/><rect x="14.5" y="666.5" width="3" height="5"/><rect x="19.5" y="660.5" width="3" height="11"/><rect x="24.5" y="664.5" width="3" height="7"/></g><rect x="14.5" y="686.5" width="11" height="11" fill="#6e6c6d" stroke="#c9c7c8" stroke-width="1"/><path d="M11 686.5 H29 M11 697.5 H29 M14.5 683 V701 M25.5 683 V701" stroke="#c9c7c8" stroke-width="1"/><path d="M14 720 L26 709 L29 711 L18 720 Z" fill="#c9c7c8"/><path d="M30 138 L33.5 138 L33.5 134.5 Z" fill="#d8d6d7"/><path d="M30 163 L33.5 163 L33.5 159.5 Z" fill="#d8d6d7"/><path d="M30 214 L33.5 214 L33.5 210.5 Z" fill="#d8d6d7"/><path d="M30 237 L33.5 237 L33.5 233.5 Z" fill="#d8d6d7"/><path d="M30 261 L33.5 261 L33.5 257.5 Z" fill="#d8d6d7"/><path d="M30 285 L33.5 285 L33.5 281.5 Z" fill="#d8d6d7"/><path d="M30 309 L33.5 309 L33.5 305.5 Z" fill="#d8d6d7"/><path d="M30 334 L33.5 334 L33.5 330.5 Z" fill="#d8d6d7"/><path d="M30 381 L33.5 381 L33.5 377.5 Z" fill="#d8d6d7"/><path d="M30 407 L33.5 407 L33.5 403.5 Z" fill="#d8d6d7"/><path d="M30 431 L33.5 431 L33.5 427.5 Z" fill="#d8d6d7"/><path d="M30 455 L33.5 455 L33.5 451.5 Z" fill="#d8d6d7"/><path d="M30 479 L33.5 479 L33.5 475.5 Z" fill="#d8d6d7"/><path d="M30 504 L33.5 504 L33.5 500.5 Z" fill="#d8d6d7"/><path d="M30 528 L33.5 528 L33.5 524.5 Z" fill="#d8d6d7"/><path d="M30 601 L33.5 601 L33.5 597.5 Z" fill="#d8d6d7"/><path d="M30 652 L33.5 652 L33.5 648.5 Z" fill="#d8d6d7"/><path d="M30 676 L33.5 676 L33.5 672.5 Z" fill="#d8d6d7"/><path d="M30 722 L33.5 722 L33.5 718.5 Z" fill="#d8d6d7"/><rect x="1" y="191" width="37" height="1" fill="#3c3a3b"/><rect x="1" y="192" width="37" height="1" fill="#555354"/><rect x="1" y="384" width="37" height="1" fill="#3c3a3b"/><rect x="1" y="385" width="37" height="1" fill="#555354"/><rect x="1" y="531" width="37" height="1" fill="#3c3a3b"/><rect x="1" y="532" width="37" height="1" fill="#555354"/><rect x="1" y="629" width="37" height="1" fill="#3c3a3b"/><rect x="1" y="630" width="37" height="1" fill="#555354"/><rect x="1" y="678" width="37" height="1" fill="#3c3a3b"/><rect x="1" y="679" width="37" height="1" fill="#555354"/></svg>
</body></html>
